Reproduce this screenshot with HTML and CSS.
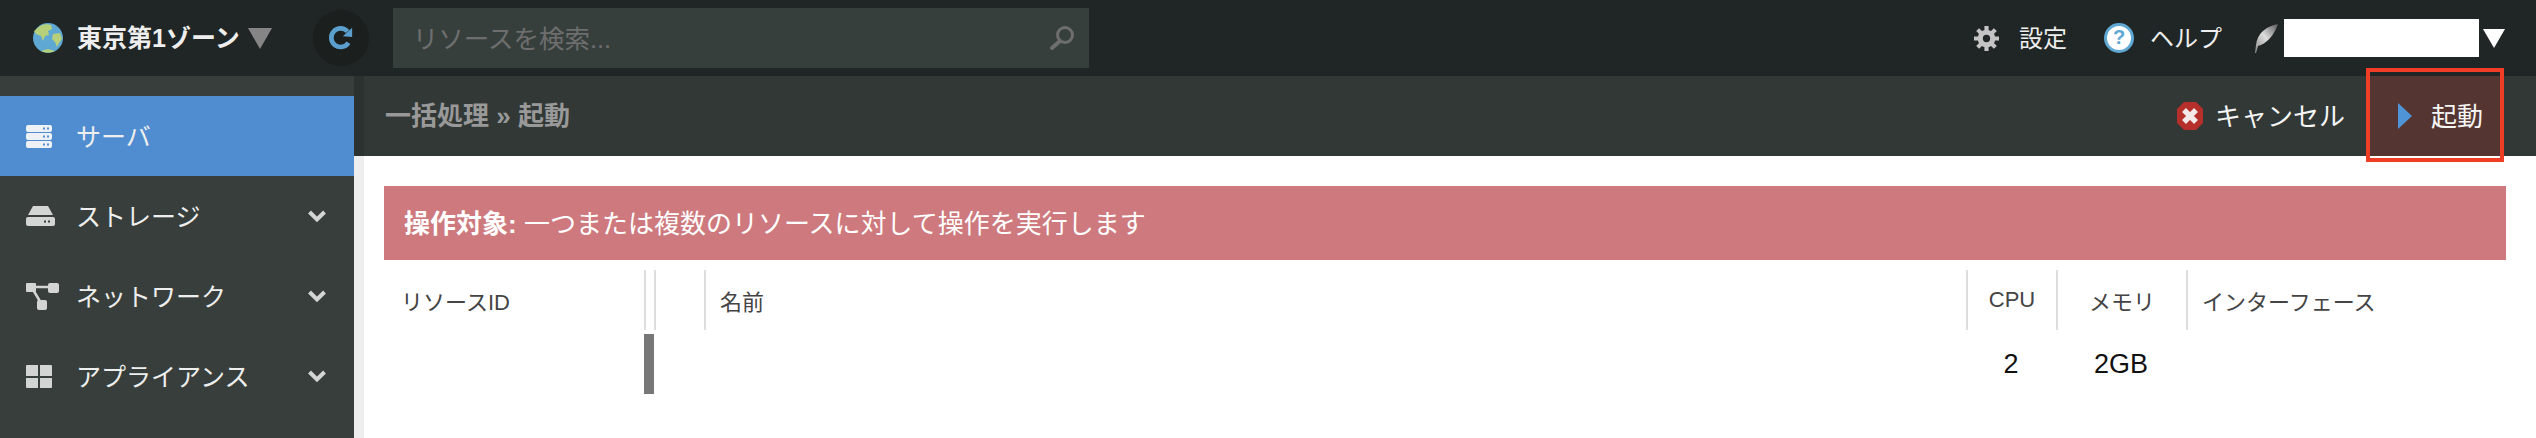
FILE: index.html
```html
<!DOCTYPE html>
<html lang="ja">
<head>
    <meta charset="UTF-8">
    <title>一括処理 起動</title>
    <link rel="stylesheet" href="styles.css">
</head>
<body>
    <header class="topbar">
        <svg class="globe" viewBox="0 0 32 32" width="32" height="32">
            <circle cx="16" cy="16" r="15" fill="#5fa8d3"/>
            <path d="M8 4c4-2 8-2 11-1l1 4-4 2 1 4-4 1-2 5-2-5-5-2-2-3z" fill="#b5cf7a"/>
            <path d="M21 12l7-1 2 6-3 4-2 4-2-5-3-3z" fill="#b5cf7a"/>
            <path d="M9 29c4 2 10 2 14 0l-7-2z" fill="#b5cf7a"/>
        </svg>
        <span class="zone">東京第1ゾーン</span>
        <span class="zone-arrow"></span>
        <button class="refresh">
            <svg viewBox="0 0 28 30" width="26" height="30">
                <path d="M21 8a10 10 0 1 0 1 12" fill="none" stroke="#5b9fcd" stroke-width="5"/>
                <path d="M16 13l10-9v10z" fill="#5b9fcd"/>
            </svg>
        </button>
        <div class="search">
            <span>リソースを検索...</span>
            <svg viewBox="0 0 26 26" width="26" height="26">
                <circle cx="16" cy="10" r="7.5" fill="none" stroke="#6e6e6e" stroke-width="3"/>
                <path d="M11 16l-8 7" fill="none" stroke="#6e6e6e" stroke-width="4" stroke-linecap="round"/>
            </svg>
        </div>
        <nav class="usernav">
            <svg class="gear" viewBox="0 0 24 24" width="25" height="25">
                <circle cx="12" cy="12" r="6" fill="none" stroke="#c4c4c4" stroke-width="5"/>
                <path d="M12 0v5M12 19v5M0 12h5M19 12h5M3.500 3.500l3.500 3.500M17 17l3.500 3.500M20.500 3.500L17 7M7 17l-3.500 3.500" stroke="#c4c4c4" stroke-width="4"/>
            </svg>
            <span class="nav-label">設定</span>
            <svg class="help" viewBox="0 0 30 30" width="30" height="30">
                <circle cx="15" cy="15" r="13.500" fill="#fff" stroke="#5fa8d3" stroke-width="3"/>
                <text x="15" y="21" text-anchor="middle" class="help-mark">?</text>
            </svg>
            <span class="nav-label">ヘルプ</span>
            <svg class="feather" viewBox="0 0 26 30" width="26" height="30">
                <defs>
                    <linearGradient id="quill" x1="1" y1="0" x2="0" y2="1">
                        <stop offset="0" stop-color="#555"/>
                        <stop offset="0.5" stop-color="#ddd"/>
                        <stop offset="1" stop-color="#888"/>
                    </linearGradient>
                </defs>
                <path d="M25 1C14 3 4 10 3 22l-1 8h1l2-7c8-2 16-10 20-22z" fill="url(#quill)"/>
            </svg>
            <span class="username"></span>
            <span class="user-arrow"></span>
        </nav>
    </header>

    <div class="layout">
        <aside class="sidebar">
            <a class="side-item active">
                <svg viewBox="0 0 26 23" width="26" height="23">
                    <path d="M2 0h22a2 2 0 0 1 2 2v3a2 2 0 0 1-2 2H2a2 2 0 0 1-2-2V2a2 2 0 0 1 2-2zM2 8h22a2 2 0 0 1 2 2v3a2 2 0 0 1-2 2H2a2 2 0 0 1-2-2v-3a2 2 0 0 1 2-2zM2 16h22a2 2 0 0 1 2 2v3a2 2 0 0 1-2 2H2a2 2 0 0 1-2-2v-3a2 2 0 0 1 2-2z" fill="#eef2f6"/>
                    <path d="M17 2.500h2v2h-2zM21 2.500h2v2h-2zM17 10.500h2v2h-2zM21 10.500h2v2h-2zM17 18.500h2v2h-2zM21 18.500h2v2h-2z" fill="#4f8dd0"/>
                </svg>
                <span>サーバ</span>
            </a>
            <a class="side-item">
                <svg viewBox="0 0 29 20" width="29" height="20">
                    <path d="M7 0h15l5 9H2z" fill="#d2d5d4"/>
                    <path d="M2 11h25a2 2 0 0 1 2 2v5a2 2 0 0 1-2 2H2a2 2 0 0 1-2-2v-5a2 2 0 0 1 2-2z" fill="#d2d5d4"/>
                    <path d="M18 14.500h2v2h-2zM22 14.500h2v2h-2z" fill="#373e3b"/>
                </svg>
                <span>ストレージ</span>
                <svg class="chevron" viewBox="0 0 20 14" width="20" height="14"><path d="M2.500 3l7.500 7.500L17.500 3" fill="none" stroke="#d2d5d4" stroke-width="4"/></svg>
            </a>
            <a class="side-item">
                <svg viewBox="0 0 33 27" width="33" height="27">
                    <rect x="0" y="0" width="10" height="9" rx="1" fill="#d2d5d4"/>
                    <rect x="22" y="0" width="11" height="10" rx="2" fill="#d2d5d4"/>
                    <rect x="11" y="17" width="10" height="10" rx="2" fill="#d2d5d4"/>
                    <path d="M6 4h18M6 5l9 15" stroke="#d2d5d4" stroke-width="2.500" fill="none"/>
                </svg>
                <span>ネットワーク</span>
                <svg class="chevron" viewBox="0 0 20 14" width="20" height="14"><path d="M2.500 3l7.500 7.500L17.500 3" fill="none" stroke="#d2d5d4" stroke-width="4"/></svg>
            </a>
            <a class="side-item">
                <svg viewBox="0 0 26 23" width="26" height="23">
                    <path d="M1 0h11v11H0V1a1 1 0 0 1 1-1zM14 0h11a1 1 0 0 1 1 1v10H14zM0 13h12v10H1a1 1 0 0 1-1-1zM14 13h12v9a1 1 0 0 1-1 1H14z" fill="#d2d5d4"/>
                </svg>
                <span>アプライアンス</span>
                <svg class="chevron" viewBox="0 0 20 14" width="20" height="14"><path d="M2.500 3l7.500 7.500L17.500 3" fill="none" stroke="#d2d5d4" stroke-width="4"/></svg>
            </a>
        </aside>

        <main class="main">
            <div class="toolbar">
                <h1 class="crumb">一括処理 » 起動</h1>
                <div class="actions">
                    <button class="action cancel">
                        <svg viewBox="0 0 28 30" width="28" height="30">
                            <path d="M8 1h12l7 7v14l-7 7H8l-7-7V8z" fill="#b5302a"/>
                            <path d="M8 9l12 12M20 9L8 21" stroke="#f3e9e8" stroke-width="5.500"/>
                        </svg>
                        <span>キャンセル</span>
                    </button>
                    <button class="action start">
                        <svg viewBox="0 0 14 26" width="14" height="26">
                            <path d="M0 0l14 13L0 26z" fill="#4f94d6"/>
                        </svg>
                        <span>起動</span>
                    </button>
                </div>
            </div>
            <div class="content">
                <div class="alert"><strong>操作対象:</strong> 一つまたは複数のリソースに対して操作を実行します</div>
                <div class="list">
                    <div class="th th-first">リソースID</div>
                    <div class="th"></div>
                    <div class="th"></div>
                    <div class="th">名前</div>
                    <div class="th center">CPU</div>
                    <div class="th center">メモリ</div>
                    <div class="th">インターフェース</div>

                    <div class="td"></div>
                    <div class="td td-state"></div>
                    <div class="td"></div>
                    <div class="td"></div>
                    <div class="td center">2</div>
                    <div class="td center">2GB</div>
                    <div class="td"></div>
                </div>
            </div>
        </main>
    </div>
</body>
</html>
```

FILE: styles.css
```css
html, body {
    margin: 0;
    height: 438px;
    overflow: hidden;
}
body {
    font-family: 'Liberation Sans', 'Noto Sans CJK JP', sans-serif;
    background: #fff;
}

/* top bar */
.topbar {
    height: 76px;
    background: #202625;
    display: flex;
    align-items: center;
    padding: 0 31px 0 32px;
    box-sizing: border-box;
}
.zone {
    margin-left: 13px;
    padding-bottom: 5px;
    color: #eee;
    font-size: 25px;
    font-weight: bold;
}
.zone-arrow {
    margin-left: 8px;
    border-left: 12px solid transparent;
    border-right: 12px solid transparent;
    border-top: 21px solid #858585;
}
.refresh {
    width: 56px;
    height: 56px;
    margin-left: 41px;
    padding: 0;
    border: none;
    border-radius: 50%;
    background: #1b1f1e;
    display: flex;
    align-items: center;
    justify-content: center;
}
.search {
    width: 696px;
    height: 60px;
    margin-left: 24px;
    padding: 0 14px 0 20px;
    box-sizing: border-box;
    background: #373f3d;
    color: #6e6e6e;
    font-size: 25.500px;
    display: flex;
    align-items: center;
    justify-content: space-between;
}
.search span {
    padding-bottom: 3px;
}
.usernav {
    margin-left: auto;
    display: flex;
    align-items: center;
    color: #eee;
    font-size: 24px;
}
.nav-label {
    margin-left: 20px;
    padding-bottom: 3px;
}
.help {
    margin-left: 37px;
}
.help-mark {
    font-size: 20px;
    font-weight: bold;
    fill: #5fa8d3;
}
.help + .nav-label {
    margin-left: 16px;
}
.feather {
    margin-left: 31px;
}
.username {
    width: 195px;
    height: 38px;
    margin-left: 5px;
    background: #fff;
}
.user-arrow {
    margin-left: 4px;
    border-left: 11px solid transparent;
    border-right: 11px solid transparent;
    border-top: 19px solid #fff;
}

/* sidebar */
.layout {
    display: flex;
    height: 362px;
}
.sidebar {
    width: 354px;
    flex-shrink: 0;
    padding-top: 20px;
    box-sizing: border-box;
    background: #373e3b;
}
.side-item {
    height: 80px;
    padding: 0 27px 0 26px;
    box-sizing: border-box;
    display: grid;
    grid-template-columns: 50px 1fr auto;
    align-items: center;
    color: #eee;
    font-size: 25px;
}
.side-item span {
    padding-bottom: 3px;
}
.side-item.active {
    background: #4f8dd0;
}

/* main */
.main {
    flex: 1;
    display: flex;
    flex-direction: column;
}
.toolbar {
    height: 80px;
    background: #313836;
    border-left: 10px solid #2c3230;
    box-sizing: border-box;
    padding-left: 21px;
    display: flex;
    align-items: center;
    justify-content: space-between;
}
.crumb {
    margin: 0;
    padding-bottom: 6px;
    color: #999;
    font-size: 26px;
    font-weight: bold;
}
.actions {
    display: flex;
    align-items: center;
    height: 100%;
}
.action {
    border: none;
    background: none;
    color: #f5f5f5;
    font-family: inherit;
    font-size: 26px;
    display: flex;
    align-items: center;
    padding: 0;
}
.action span {
    padding-bottom: 4px;
}
.cancel {
    margin-right: 21px;
    gap: 11px;
}
.start {
    position: relative;
    width: 138px;
    height: 100%;
    margin-right: 32px;
    padding-left: 32px;
    gap: 19px;
    background: #553531;
    box-sizing: border-box;
}
/* red outline drawn over the screenshot */
.start::after {
    content: '';
    position: absolute;
    left: 0;
    right: 0;
    top: -8px;
    bottom: -6px;
    border: 4px solid #ef3e25;
}

/* content */
.content {
    flex: 1;
    border-left: 10px solid #eee;
    padding: 30px 30px 0 20px;
}
.alert {
    height: 74px;
    padding: 0 0 3px 20px;
    box-sizing: border-box;
    display: flex;
    align-items: center;
    white-space: pre;
    background: #cd797e;
    color: #fff;
    font-size: 26px;
}
.list {
    display: grid;
    grid-template-columns: 260px 10px 50px 1262px 90px 130px 1fr;
    grid-template-rows: 60px 60px;
    row-gap: 4px;
    margin-top: 10px;
}
.th, .td {
    display: flex;
    align-items: center;
    font-size: 22px;
    color: #444;
}
.th {
    border-left: 2px solid #ddd;
    padding-left: 14px;
}
.th-first {
    border-left: none;
    padding-left: 17px;
}
.td {
    font-size: 27px;
    color: #111;
}
.td-state {
    background: #777;
}
.center {
    justify-content: center;
    padding-left: 0;
}
```
